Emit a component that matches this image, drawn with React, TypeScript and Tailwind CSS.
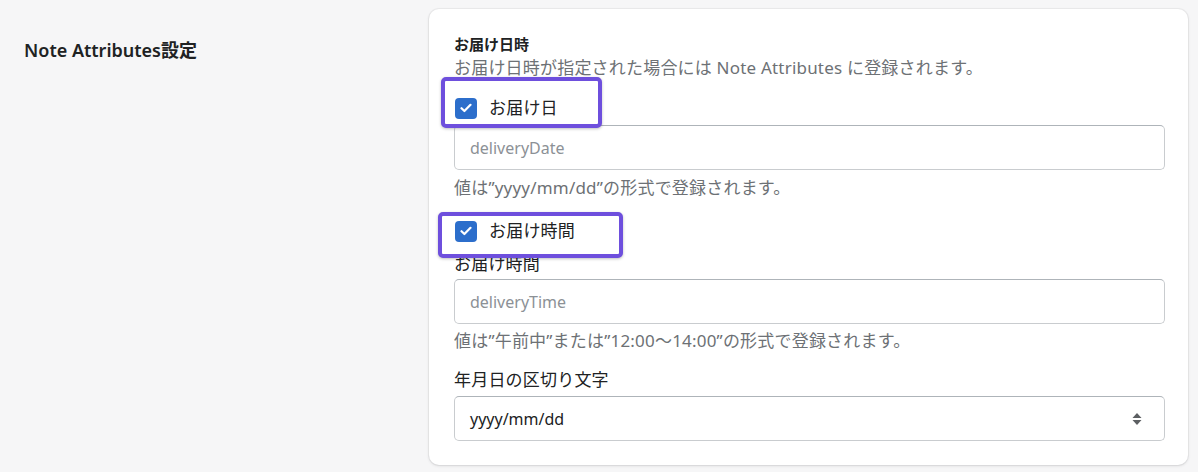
import { type ReactNode } from 'react';

const font = { fontFamily: '"Noto Sans", "Noto Sans CJK JP", sans-serif' };

function CheckRow({ label, box }: { label: string; box: string }) {
  return (
    <div className="relative h-[24px]">
      <div
        className={`absolute z-10 rounded-[5px] border-4 border-[#6e4fdd] bg-white shadow-[0_1px_3px_rgba(0,0,0,0.25)] ${box}`}
      />
      <div className="relative z-20 flex h-[24px] items-center gap-[12px] pl-[1px]">
        <span className="flex h-[21px] w-[22px] items-center justify-center rounded-[4px] bg-[#2c6ecb]">
          <svg width="12" height="10" viewBox="0 0 12 10" fill="none">
            <path
              d="M1.5 5.2 4.4 8 10.5 1.8"
              stroke="white"
              strokeWidth="2.2"
              strokeLinecap="round"
              strokeLinejoin="round"
            />
          </svg>
        </span>
        <span className="text-[17px] leading-[24px] tracking-[0.2px] text-[#202223]">{label}</span>
      </div>
    </div>
  );
}

function Field({ children, className = '' }: { children: ReactNode; className?: string }) {
  return (
    <div
      className={`flex h-[45px] items-center rounded-[5px] border border-[#c9cccf] border-t-[#aeb4b9] bg-white pl-[15px] pr-[20px] text-[16px] ${className}`}
    >
      {children}
    </div>
  );
}

function Help({ children, className = '' }: { children: ReactNode; className?: string }) {
  return (
    <p className={`text-[17px] leading-[24px] tracking-[0.2px] text-[#6d7175] ${className}`}>{children}</p>
  );
}

export default function App() {
  return (
    <div className="flex min-h-[472px] bg-[#f6f6f7] pl-[24px] pr-[10px] pt-[9px]" style={font}>
      <div className="w-[405px] shrink-0 pt-[29px]">
        <h2 className="text-[18px] font-semibold leading-[24px] text-[#202223]">Note Attributes設定</h2>
      </div>
      <div className="h-[456px] flex-1 rounded-[10px] bg-white pl-[25px] pr-[23px] pt-[25px] shadow-[0_0_0_1px_rgba(63,63,68,0.05),0_1px_3px_rgba(63,63,68,0.15)]">
        <h3 className="text-[15px] font-bold leading-[20px] text-[#202223]">お届け日時</h3>
        <Help className="mt-[2px]">お届け日時が指定された場合には Note Attributes に登録されます。</Help>

        <div className="mt-[16px]">
          <CheckRow label="お届け日" box="-left-[13px] -top-[19px] h-[51px] w-[161px]" />
        </div>
        <Field className="mt-[5px] text-[#8c9196]">deliveryDate</Field>
        <Help className="mt-[6px]">値は”yyyy/mm/dd”の形式で登録されます。</Help>

        <div className="mt-[19px]">
          <CheckRow label="お届け時間" box="-left-[16px] -top-[7px] h-[46px] w-[185px]" />
        </div>
        <p className="mt-[9px] text-[17px] leading-[24px] tracking-[0.2px] text-[#202223]">お届け時間</p>
        <Field className="mt-[3px] text-[#8c9196]">deliveryTime</Field>
        <Help className="mt-[5px]">値は”午前中”または”12:00〜14:00”の形式で登録されます。</Help>

        <p className="mt-[15px] text-[17px] leading-[24px] tracking-[0.2px] text-[#202223]">年月日の区切り文字</p>
        <Field className="mt-[4px] h-[44px] justify-between text-[#202223]">
          <span>yyyy/mm/dd</span>
          <svg width="10" height="14" viewBox="0 0 10 14" className="mr-[2px]">
            <path d="M5 1 9.5 6H0.5Z" fill="#5c5f62" />
            <path d="M5 13 9.5 8H0.5Z" fill="#5c5f62" />
          </svg>
        </Field>
      </div>
    </div>
  );
}
